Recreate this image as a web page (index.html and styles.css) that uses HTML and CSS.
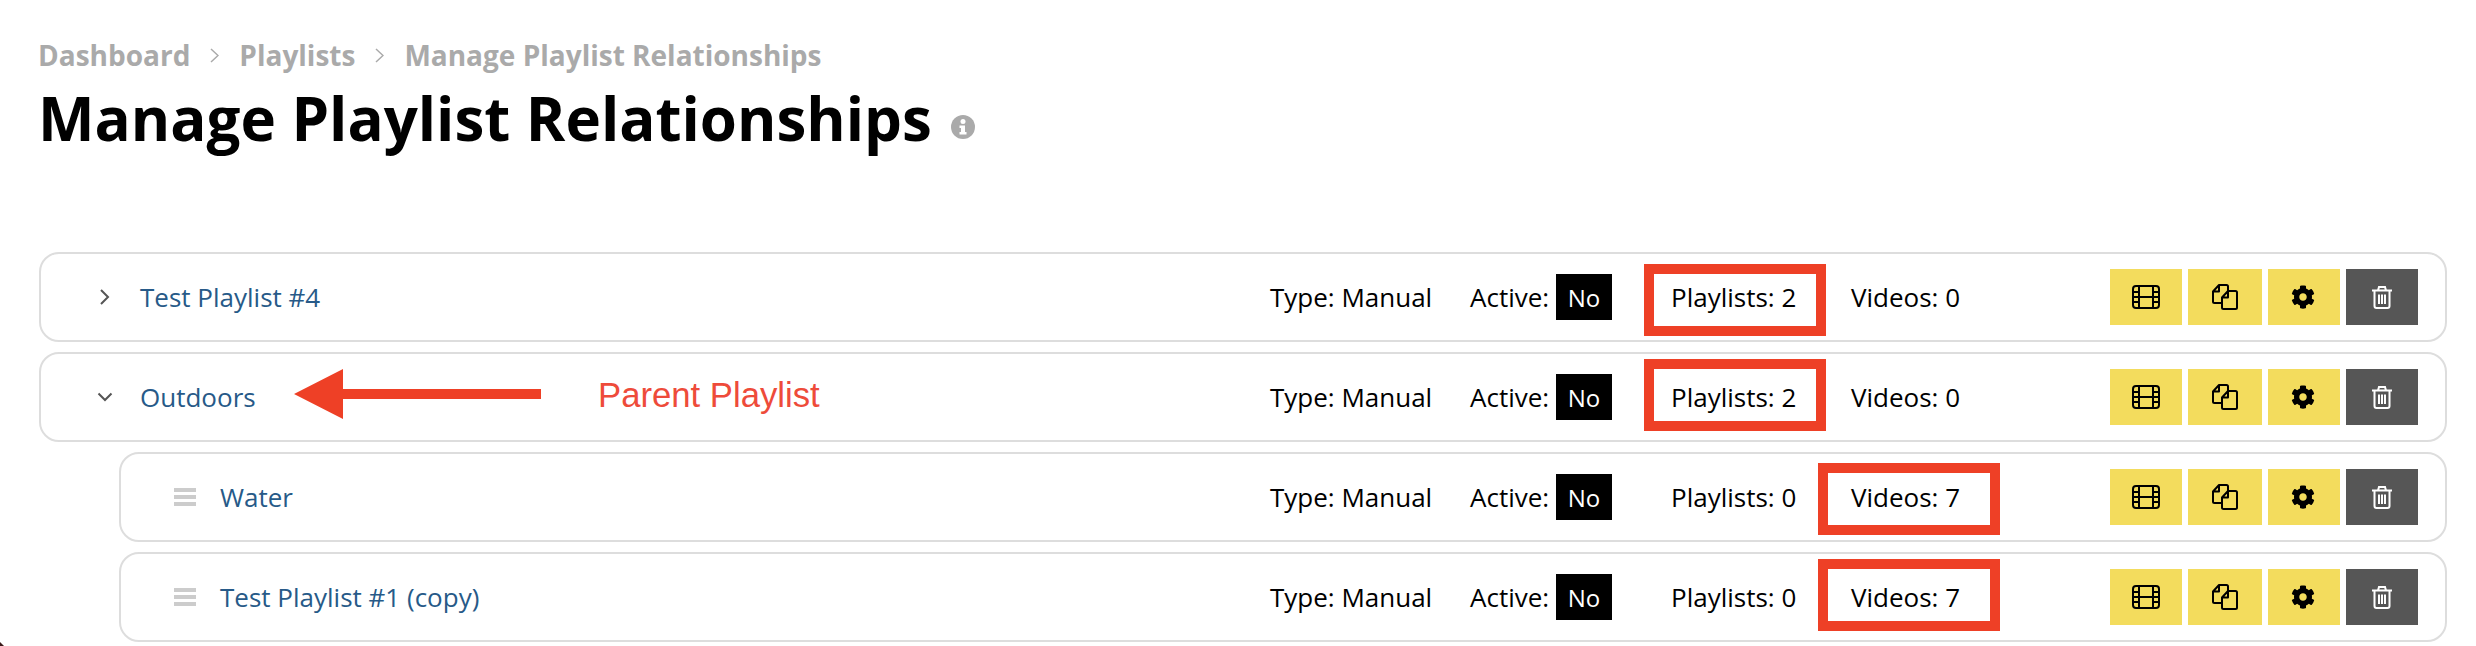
FILE: index.html
```html
<!DOCTYPE html>
<html lang="en">
<head>
    <meta charset="UTF-8">
    <title>Manage Playlist Relationships</title>
    <link rel="stylesheet" href="styles.css">
</head>
<body>
<svg width="0" height="0" class="defs">
    <symbol id="i-film" viewBox="0 0 28 24">
        <rect x="1" y="1" width="26" height="22" rx="3" fill="none" stroke="currentColor" stroke-width="2"/>
        <path d="M7 1V23M21 1V23M7 12H21M1 7H7M1 12H7M1 17H7M21 7H27M21 12H27M21 17H27" fill="none" stroke="currentColor" stroke-width="2"/>
    </symbol>
    <symbol id="i-copy" viewBox="0 0 26 26">
        <path d="M10 19H2.500Q1 19 1 17.500V7.500L7 1H14.500Q16 1 16 2.500V7M7 1V7.500H1" fill="none" stroke="currentColor" stroke-width="2" stroke-linejoin="round"/>
        <path d="M16 7H23.500Q25 7 25 8.500V23.500Q25 25 23.500 25H11.500Q10 25 10 23.500V13.500ZM16 7V13.500H10" fill="none" stroke="currentColor" stroke-width="2" stroke-linejoin="round"/>
    </symbol>
    <symbol id="i-cog" viewBox="0 0 512 512">
        <path fill="currentColor" d="M487.4 315.7l-42.6-24.6c4.3-23.2 4.3-47 0-70.2l42.6-24.6c4.9-2.8 7.1-8.6 5.5-14-11.1-35.6-30-67.8-54.7-94.6-3.8-4.1-10-5.1-14.8-2.3L380.8 110c-17.9-15.4-38.5-27.3-60.8-35.1V25.800c0-5.600-3.900-10.500-9.400-11.700-36.700-8.200-74.300-7.800-109.200 0-5.500 1.200-9.400 6.100-9.400 11.700V75c-22.200 7.900-42.800 19.800-60.800 35.100L88.700 85.500c-4.900-2.800-11-1.900-14.800 2.300-24.700 26.700-43.600 58.900-54.700 94.600-1.700 5.400.6 11.200 5.500 14L67.300 221c-4.300 23.200-4.300 47 0 70.200l-42.600 24.600c-4.900 2.800-7.100 8.600-5.500 14 11.100 35.600 30 67.800 54.700 94.600 3.800 4.100 10 5.100 14.800 2.300l42.600-24.600c17.900 15.400 38.500 27.300 60.800 35.100v49.200c0 5.600 3.900 10.500 9.400 11.700 36.700 8.200 74.300 7.800 109.200 0 5.500-1.200 9.400-6.100 9.400-11.700v-49.200c22.200-7.900 42.800-19.800 60.800-35.100l42.600 24.600c4.900 2.800 11 1.900 14.800-2.300 24.700-26.700 43.600-58.900 54.700-94.600 1.500-5.500-.7-11.300-5.600-14.100zM256 336c-44.100 0-80-35.900-80-80s35.900-80 80-80 80 35.900 80 80-35.900 80-80 80z"/>
    </symbol>
    <symbol id="i-trash" viewBox="0 0 20 23">
        <path d="M0 4.500H20M6 4.500L7 1H13L14 4.500M2.500 4.500V20Q2.500 22 4.500 22H15.500Q17.500 22 17.500 20V4.500M7 8.500V18M10 8.500V18M13 8.500V18" fill="none" stroke="currentColor" stroke-width="2"/>
    </symbol>
    <symbol id="i-next" viewBox="0 0 9 15">
        <path d="M1 1L8 7.500L1 14" fill="none" stroke="currentColor" stroke-width="1.500"/>
    </symbol>
</svg>

<div class="page">
    <div class="breadcrumb">
        <a href="#">Dashboard</a>
        <svg class="crumb-sep"><use href="#i-next"/></svg>
        <a href="#">Playlists</a>
        <svg class="crumb-sep"><use href="#i-next"/></svg>
        <a href="#">Manage Playlist Relationships</a>
    </div>

    <h1>
        Manage Playlist Relationships
        <svg class="info" viewBox="0 0 24 24">
            <circle cx="12" cy="12" r="12" fill="#aaa"/>
            <circle cx="12" cy="6.500" r="2.500" fill="#fff"/>
            <path d="M8.500 10.500H14V17H15.500V19.500H8.500V17H10V13H8.500Z" fill="#fff"/>
        </svg>
    </h1>

    <div class="list">
        <div class="row">
            <svg class="toggle" viewBox="0 0 16 16"><path d="M4 1L11 8L4 15"/></svg>
            <a class="name" href="#">Test Playlist #4</a>
            <div class="cell cell-type">Type: Manual</div>
            <div class="cell cell-active">Active: <span class="badge">No</span></div>
            <div class="cell cell-playlists">Playlists: 2<span class="mark mark-playlists top-10"></span></div>
            <div class="cell cell-videos">Videos: 0</div>
            <div class="actions">
                <button class="btn"><svg class="icon-film"><use href="#i-film"/></svg></button>
                <button class="btn btn-wide"><svg class="icon-copy"><use href="#i-copy"/></svg></button>
                <button class="btn"><svg class="icon-cog"><use href="#i-cog"/></svg></button>
                <button class="btn btn-dark"><svg class="icon-trash"><use href="#i-trash"/></svg></button>
            </div>
        </div>

        <div class="row">
            <svg class="toggle" viewBox="0 0 16 16"><path d="M1.500 4.500L8 11L14.500 4.500"/></svg>
            <a class="name" href="#">Outdoors</a>
            <svg class="arrow" viewBox="0 0 247 50"><path d="M0 25L49 0V20H247V30H49V50Z"/></svg>
            <span class="note">Parent Playlist</span>
            <div class="cell cell-type">Type: Manual</div>
            <div class="cell cell-active">Active: <span class="badge">No</span></div>
            <div class="cell cell-playlists">Playlists: 2<span class="mark mark-playlists top-5"></span></div>
            <div class="cell cell-videos">Videos: 0</div>
            <div class="actions">
                <button class="btn"><svg class="icon-film"><use href="#i-film"/></svg></button>
                <button class="btn btn-wide"><svg class="icon-copy"><use href="#i-copy"/></svg></button>
                <button class="btn"><svg class="icon-cog"><use href="#i-cog"/></svg></button>
                <button class="btn btn-dark"><svg class="icon-trash"><use href="#i-trash"/></svg></button>
            </div>
        </div>

        <div class="row row-child">
            <span class="handle"><i></i><i></i><i></i></span>
            <a class="name" href="#">Water</a>
            <div class="cell cell-type">Type: Manual</div>
            <div class="cell cell-active">Active: <span class="badge">No</span></div>
            <div class="cell cell-playlists">Playlists: 0</div>
            <div class="cell cell-videos">Videos: 7<span class="mark mark-videos top-9"></span></div>
            <div class="actions">
                <button class="btn"><svg class="icon-film"><use href="#i-film"/></svg></button>
                <button class="btn btn-wide"><svg class="icon-copy"><use href="#i-copy"/></svg></button>
                <button class="btn"><svg class="icon-cog"><use href="#i-cog"/></svg></button>
                <button class="btn btn-dark"><svg class="icon-trash"><use href="#i-trash"/></svg></button>
            </div>
        </div>

        <div class="row row-child">
            <span class="handle"><i></i><i></i><i></i></span>
            <a class="name" href="#">Test Playlist #1 (copy)</a>
            <div class="cell cell-type">Type: Manual</div>
            <div class="cell cell-active">Active: <span class="badge">No</span></div>
            <div class="cell cell-playlists">Playlists: 0</div>
            <div class="cell cell-videos">Videos: 7<span class="mark mark-videos top-5"></span></div>
            <div class="actions">
                <button class="btn"><svg class="icon-film"><use href="#i-film"/></svg></button>
                <button class="btn btn-wide"><svg class="icon-copy"><use href="#i-copy"/></svg></button>
                <button class="btn"><svg class="icon-cog"><use href="#i-cog"/></svg></button>
                <button class="btn btn-dark"><svg class="icon-trash"><use href="#i-trash"/></svg></button>
            </div>
        </div>
    </div>
</div>
<div class="corner"></div>
</body>
</html>
```

FILE: styles.css
```css
html, body {
    height: 100%;
    overflow: hidden;
}
body {
    margin: 0;
    background: #fff;
    color: #000;
    font-family: "Open Sans", sans-serif;
    font-size: 26px;
}
.defs {
    position: absolute;
}
.page {
    padding: 38px 29px 0 38px;
}

.breadcrumb {
    display: flex;
    align-items: center;
    height: 33px;
    font-size: 28px;
    font-weight: 700;
}
.breadcrumb a {
    color: #aaa;
    text-decoration: none;
}
.crumb-sep {
    width: 9px;
    height: 15px;
    margin: 2px 20px 0 20px;
    color: #aaa;
}

h1 {
    display: flex;
    align-items: center;
    height: 80px;
    margin: 7px 0 94px;
    font-size: 60px;
    font-weight: 700;
    line-height: 80px;
}
.info {
    width: 24px;
    height: 24px;
    margin: 18px 0 0 19px;
}

.list {
    display: flex;
    flex-direction: column;
    gap: 10px;
}
.row {
    display: flex;
    align-items: center;
    height: 90px;
    box-sizing: border-box;
    padding: 0 27px 0 56px;
    border: 2px solid #ddd;
    border-radius: 20px;
    position: relative;
    margin-left: 1px;
}
.row-child {
    margin-left: 81px;
    padding-left: 53px;
}
.toggle {
    flex: none;
    width: 16px;
    height: 16px;
    margin-right: 27px;
}
.toggle path {
    fill: none;
    stroke: #555;
    stroke-width: 2;
}
.handle {
    flex: none;
    display: flex;
    flex-direction: column;
    gap: 3px;
    width: 22px;
    margin-right: 24px;
}
.handle i {
    height: 4px;
    background: #ccc;
}
.name {
    color: #275a88;
    text-decoration: none;
}
.cell {
    align-self: stretch;
    display: flex;
    align-items: center;
    flex: none;
    position: relative;
    white-space: pre;
}
.cell-type {
    margin-left: auto;
    width: 200px;
}
.cell-active {
    width: 201px;
}
.cell-playlists {
    width: 180px;
}
.cell-videos {
    width: 259px;
}
.badge {
    display: flex;
    align-items: center;
    justify-content: center;
    width: 56px;
    height: 46px;
    background: #000;
    color: #fff;
    font-size: 24px;
}

.actions {
    display: flex;
    gap: 6px;
}
.btn {
    display: flex;
    align-items: center;
    justify-content: center;
    width: 72px;
    height: 56px;
    padding: 0;
    border: 0;
    background: #f3dc5d;
    color: #000;
}
.btn-wide {
    width: 74px;
}
.btn-dark {
    background: #565656;
    color: #fff;
}
.icon-film { width: 28px; height: 24px; }
.icon-copy { width: 26px; height: 26px; }
.icon-cog { width: 24px; height: 24px; margin-right: 2px; }
.icon-trash { width: 20px; height: 23px; }

/* red annotations drawn over the screenshot */
.mark {
    position: absolute;
    width: 182px;
    height: 72px;
    box-sizing: border-box;
    border: 10px solid #ee4026;
}
.mark-playlists { left: -27px; }
.mark-videos { left: -33px; }
.top-10 { top: 10px; }
.top-9 { top: 9px; }
.top-5 { top: 5px; }
.arrow {
    position: absolute;
    left: 253px;
    top: 15px;
    width: 247px;
    height: 50px;
    fill: #ee4026;
}
.note {
    position: absolute;
    left: 557px;
    top: 22px;
    color: #ee4b3a;
    font-family: "Liberation Sans", Arial, sans-serif;
    font-size: 34.700px;
}
.corner {
    position: fixed;
    left: 0;
    bottom: 0;
    width: 4px;
    height: 4px;
    background: #3a1a1a;
    clip-path: polygon(0 0, 100% 100%, 0 100%);
}
```
